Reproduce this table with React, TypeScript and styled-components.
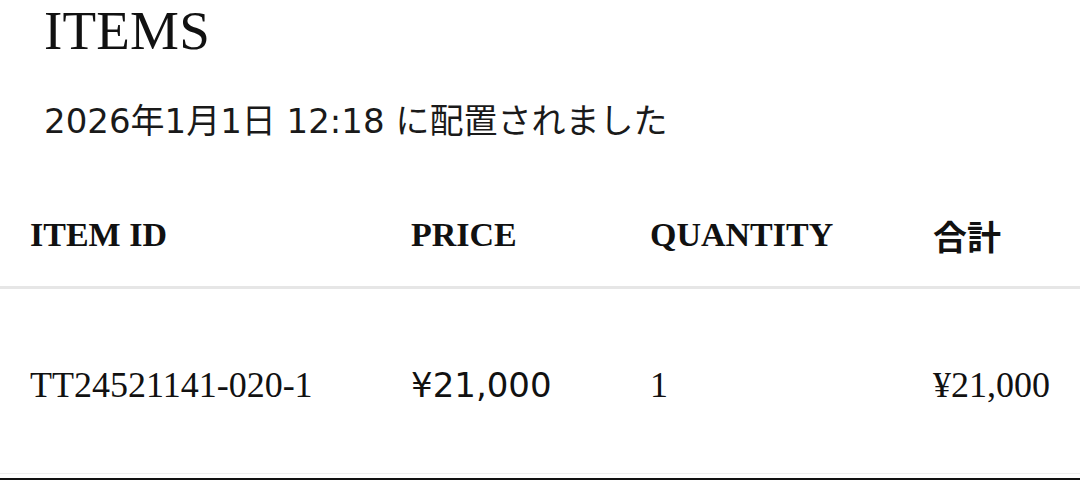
import React from 'react';
import styled, { createGlobalStyle } from 'styled-components';

const GlobalStyle = createGlobalStyle`
  html, body {
    margin: 0;
    padding: 0;
    background: #ffffff;
    color: #111111;
    overflow: hidden;
  }
`;

const Page = styled.div`
  width: 1080px;
  height: 480px;
  overflow: hidden;
`;

const Title = styled.h1`
  margin: 0;
  padding-left: 44px;
  font-family: 'Liberation Serif', serif;
  font-weight: 400;
  font-size: 55px;
  line-height: 62px;
  letter-spacing: 0.2px;
`;

const PlacedAt = styled.p`
  margin: 39px 0 0;
  padding-left: 44px;
  font-family: 'DejaVu Sans', 'Noto Sans CJK JP', sans-serif;
  font-size: 34px;
  line-height: 40px;
  color: #1a1a1a;
`;

const Table = styled.div`
  margin-top: 43px;
`;

const Row = styled.div<{ $head?: boolean }>`
  display: grid;
  grid-template-columns: 381px 239px 283px 1fr;
  align-items: center;
  padding-left: 30px;
  height: ${p => (p.$head ? '102px' : '176px')};
  padding-top: ${p => (p.$head ? '0' : '8px')};
  border-bottom: ${p => (p.$head ? '3px solid #e6e6e6' : '1px solid #eeeeee')};
`;

const HeadCell = styled.div`
  font-family: 'Liberation Serif', 'Noto Sans CJK JP', serif;
  font-weight: 700;
  font-size: 34px;
`;

const Cell = styled.div<{ $sans?: boolean }>`
  font-family: ${p =>
    p.$sans ? "'DejaVu Sans', 'Noto Sans CJK JP', sans-serif" : "'Liberation Serif', serif"};
  font-size: ${p => (p.$sans ? '34px' : '36px')};
`;

const BottomEdge = styled.div`
  margin-top: 4px;
  border-top: 3px solid #111111;
`;

export default function App() {
  return (
    <Page>
      <GlobalStyle />
      <Title>ITEMS</Title>
      <PlacedAt>2026年1月1日 12:18 に配置されました</PlacedAt>
      <Table>
        <Row $head>
          <HeadCell>ITEM ID</HeadCell>
          <HeadCell>PRICE</HeadCell>
          <HeadCell>QUANTITY</HeadCell>
          <HeadCell>合計</HeadCell>
        </Row>
        <Row>
          <Cell>TT24521141-020-1</Cell>
          <Cell $sans>¥21,000</Cell>
          <Cell>1</Cell>
          <Cell>¥21,000</Cell>
        </Row>
      </Table>
      <BottomEdge />
    </Page>
  );
}
